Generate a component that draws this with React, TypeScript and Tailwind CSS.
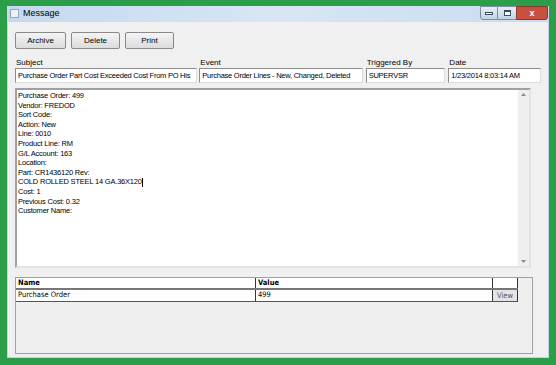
import React from "react";

const lines = [
  "Purchase Order: 499",
  "Vendor: FREDOD",
  "Sort Code:",
  "Action: New",
  "Line: 0010",
  "Product Line: RM",
  "G/L Account: 163",
  "Location:",
  "Part: CR1436120 Rev:",
  "COLD ROLLED STEEL 14 GA.36X120",
  "Cost: 1",
  "Previous Cost: 0.32",
  "Customer Name:",
];

const Btn = ({ label, w }: { label: string; w: string }) => (
  <div
    className={`${w} h-[17px] flex items-center justify-center rounded-[2px] border border-[#8a8a8a] bg-gradient-to-b from-[#f4f4f4] to-[#dcdcdc] text-[8px] text-black`}
  >
    {label}
  </div>
);

const Field = ({ label, value, w }: { label: string; value: string; w: string }) => (
  <div className={`${w} flex flex-col`}>
    <div className="h-[11px] text-[8px] leading-[11px] pl-[1px] text-black">{label}</div>
    <div className="h-[15px] border border-t-[#8d8d8d] border-l-[#8d8d8d] border-r-[#dcdcdc] border-b-[#dcdcdc] bg-white text-[7.5px] tracking-[-0.25px] leading-[13px] pl-[2px] whitespace-nowrap overflow-hidden text-black">
      {value}
    </div>
  </div>
);

export default function App() {
  return (
    <div
      className="w-[556px] h-[365px] bg-[#2c9d49] pt-[6px] pl-[7px] pr-[7px] pb-[7px]"
      style={{ fontFamily: '"Liberation Sans", Arial, sans-serif' }}
    >
      <div className="w-full h-full flex flex-col">
        {/* title bar */}
        <div className="h-[16px] flex items-start bg-gradient-to-r from-[#c4d9ef] via-[#d8e6f4] to-[#c9dcf0]">
          <div className="mt-[3px] ml-[3px] w-[9px] h-[9px] border border-[#9aa6b4] bg-[#eef2f6]" />
          <div className="ml-[4px] mt-[2px] text-[9px] leading-[11px] text-black">Message</div>
          <div className="ml-auto mr-[1px] flex h-[14px] shrink-0">
            <div className="shrink-0 w-[18px] h-[14px] border border-[#7d8ea3] rounded-bl-[3px] bg-gradient-to-b from-[#e6eef7] to-[#c3d3e5] flex items-center justify-center">
              <div className="w-[8px] h-[3px] border border-[#3b4a5c] bg-white" />
            </div>
            <div className="shrink-0 w-[18px] h-[14px] border-y border-[#7d8ea3] bg-gradient-to-b from-[#e6eef7] to-[#c3d3e5] flex items-center justify-center">
              <div className="w-[7px] h-[6px] border border-[#3b4a5c] border-t-2 bg-white" />
            </div>
            <div className="shrink-0 w-[32px] h-[14px] border border-[#8a3a2c] rounded-br-[3px] bg-[#c9503f] flex items-center justify-center text-white text-[9px] font-bold leading-none">
              x
            </div>
          </div>
        </div>
        {/* client */}
        <div className="flex-1 bg-[#f0f0f0] border-x border-b border-[#c3d3e5] flex flex-col pl-[7px] pr-[7px]">
          <div className="flex gap-[5px] mt-[10px]">
            <Btn label="Archive" w="w-[51px]" />
            <Btn label="Delete" w="w-[49px]" />
            <Btn label="Print" w="w-[49px]" />
          </div>
          <div className="flex mt-[8px]">
            <Field label="Subject" value="Purchase Order Part Cost Exceeded Cost From PO His" w="w-[183px]" />
            <div className="w-[2px]" />
            <Field label="Event" value="Purchase Order Lines - New, Changed, Deleted" w="w-[164px]" />
            <div className="w-[3px]" />
            <Field label="Triggered By" value="SUPERVSR" w="w-[80px]" />
            <div className="w-[3px]" />
            <Field label="Date" value="1/23/2014 8:03:14 AM" w="w-[93px]" />
          </div>
          {/* message body */}
          <div className="mt-[5px] w-[516px] h-[180px] flex border-2 border-t-[#a0a0a0] border-l-[#a0a0a0] border-r-[#e3e3e3] border-b-[#e3e3e3] bg-white">
            <div className="flex-1 pl-[1px] pt-[1px] text-[7.5px] tracking-[-0.2px] leading-[9.6px] text-black">
              {lines.map((l, i) => (
                <div key={i} className="whitespace-nowrap">
                  {l}
                  {i === 9 && <span className="inline-block w-[1px] h-[9px] bg-black align-middle" />}
                </div>
              ))}
            </div>
            <div className="w-[11px] bg-[#efefef] flex flex-col items-center justify-between py-[3px]">
              <svg width="5" height="3" viewBox="0 0 5 3"><path d="M0 3 L2.5 0 L5 3 Z" fill="#8a8a8a" /></svg>
              <svg width="5" height="3" viewBox="0 0 5 3"><path d="M0 0 L2.5 3 L5 0 Z" fill="#8a8a8a" /></svg>
            </div>
          </div>
          {/* grid */}
          <div className="mt-[9px] w-[518px] h-[77px] border border-[#a0a0a0] bg-[#efefef]">
            <div className="w-[502px] bg-white text-[7.5px] leading-[10px] text-black border-b border-[#555]" style={{ fontFamily: '"DejaVu Sans Condensed", "DejaVu Sans", sans-serif' }}>
              <div className="flex h-[12px] border-b-2 border-[#777]">
                <div className="w-[240px] pl-[2px] font-bold border-r border-[#333]">Name</div>
                <div className="w-[237px] pl-[2px] font-bold border-r border-[#333]">Value</div>
                <div className="flex-1 border-r border-[#333]" />
              </div>
              <div className="flex h-[11px]">
                <div className="w-[240px] pl-[2px] border-r border-[#333]">Purchase Order</div>
                <div className="w-[237px] pl-[2px] border-r border-[#333]">499</div>
                <div className="flex-1 border-r border-[#333] bg-[#e4e4e4] flex items-center justify-center text-[#555]">View</div>
              </div>
            </div>
          </div>
        </div>
      </div>
    </div>
  );
}
